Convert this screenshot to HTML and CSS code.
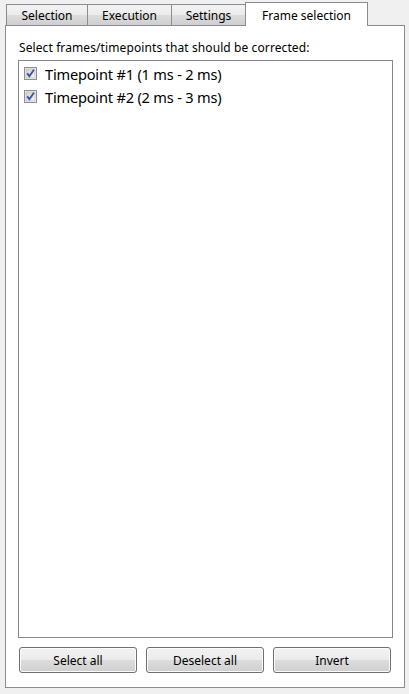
FILE: index.html
```html
<!DOCTYPE html>
<html>
<head>
<meta charset="utf-8">
<link rel="stylesheet" href="styles.css">
</head>
<body>
<div class="window">
  <div class="tabs">
    <div class="tab tab-selection">Selection</div>
    <div class="tab tab-execution">Execution</div>
    <div class="tab tab-settings">Settings</div>
    <div class="tab tab-active">Frame selection</div>
  </div>
  <div class="pane">
    <div class="label">Select frames/timepoints that should be corrected:</div>
    <div class="list">
      <div class="item">
        <svg class="check" width="13" height="13" viewBox="0 0 13 13">
          <defs>
            <linearGradient id="cg" x1="0" y1="0" x2="1" y2="1">
              <stop offset="0" stop-color="#cfd0d2"/>
              <stop offset="1" stop-color="#f6f6f6"/>
            </linearGradient>
          </defs>
          <rect x="0.5" y="0.5" width="12" height="12" fill="#f4f4f4" stroke="#8e8f8f"/>
          <rect x="2" y="2" width="9" height="9" fill="url(#cg)" stroke="#aeb0b4" stroke-width="0.6"/>
          <path d="M3.2 6.4 L5.4 9.2 L9.9 2.8" fill="none" stroke="#3a55a0" stroke-width="1.9" stroke-linejoin="miter"/>
        </svg>
        <span class="item-text">Timepoint #1 (1 ms - 2 ms)</span>
      </div>
      <div class="item">
        <svg class="check" width="13" height="13" viewBox="0 0 13 13">
          <rect x="0.5" y="0.5" width="12" height="12" fill="#f4f4f4" stroke="#8e8f8f"/>
          <rect x="2" y="2" width="9" height="9" fill="url(#cg)" stroke="#aeb0b4" stroke-width="0.6"/>
          <path d="M3.2 6.4 L5.4 9.2 L9.9 2.8" fill="none" stroke="#3a55a0" stroke-width="1.9" stroke-linejoin="miter"/>
        </svg>
        <span class="item-text">Timepoint #2 (2 ms - 3 ms)</span>
      </div>
    </div>
    <div class="buttons">
      <button class="btn">Select all</button>
      <button class="btn">Deselect all</button>
      <button class="btn">Invert</button>
    </div>
  </div>
</div>
</body>
</html>
```

FILE: styles.css
```css
html, body {
  margin: 0;
  padding: 0;
}
body {
  background: #f0f0f0;
  font-family: "Noto Sans", "Open Sans", "DejaVu Sans", sans-serif;
  font-size: 12px;
  color: #000;
  width: 409px;
  height: 694px;
  overflow: hidden;
}
.window {
  padding: 0;
}
.tabs {
  display: flex;
  align-items: flex-end;
  height: 25px;
  padding-left: 6px;
  position: relative;
  z-index: 2;
}
.tab {
  box-sizing: border-box;
  height: 21px;
  border: 1px solid #898c95;
  border-bottom: none;
  background: linear-gradient(#f3f3f3 0%, #ebebeb 50%, #dddddd 50%, #cfcfcf 100%);
  display: flex;
  align-items: center;
  justify-content: center;
  line-height: 15px;
  padding-top: 1px;
  margin-right: -1px;
}
.tab-selection { width: 82px; }
.tab-execution { width: 85px; }
.tab-settings { width: 75px; }
.tab-active {
  width: 123px;
  height: 24px;
  margin-bottom: -1px;
  background: #fff;
  padding-top: 1px;
  padding-bottom: 0;
}
.pane {
  box-sizing: border-box;
  margin-left: 5px;
  width: 400px;
  height: 663px;
  border: 1px solid #898c95;
  background: #fff;
  display: flex;
  flex-direction: column;
  padding: 14px 11px 14px 12px;
}
.label {
  line-height: 15px;
  height: 15px;
  padding-left: 1px;
  letter-spacing: 0.1px;
  white-space: nowrap;
}
.list {
  box-sizing: border-box;
  margin-top: 5px;
  height: 578px;
  border: 1px solid #828790;
  background: #fff;
  padding: 1px 0 0 5px;
}
.item {
  display: flex;
  align-items: center;
  height: 23px;
}
.check {
  display: block;
  flex: none;
}
.item-text {
  margin-left: 8px;
  font-size: 14.6px;
  letter-spacing: -0.2px;
  line-height: 20px;
  white-space: nowrap;
}
.buttons {
  display: grid;
  grid-template-columns: repeat(3, 118px);
  column-gap: 9px;
  margin-top: 9px;
  padding-left: 1px;
}
.btn {
  box-sizing: border-box;
  height: 26px;
  border: 1px solid #707070;
  border-radius: 3px;
  background: linear-gradient(#f2f2f2 0%, #ebebeb 50%, #dddddd 50%, #cfcfcf 100%);
  box-shadow: inset 0 0 0 1px #fbfbfb;
  font-family: inherit;
  font-size: 12px;
  color: #000;
  padding: 0;
}
```
